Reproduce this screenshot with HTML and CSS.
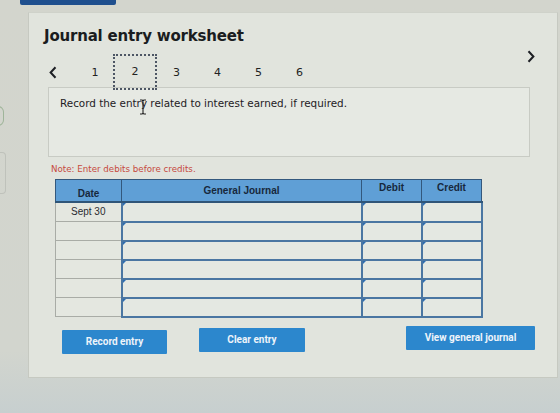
FILE: index.html
```html
<!DOCTYPE html>
<html lang="en">
<head>
<meta charset="utf-8">
<title>Journal entry worksheet</title>
<link rel="stylesheet" href="styles.css">
</head>
<body>
  <div class="topbar"><div class="tab"></div></div>
  <div class="screen">
    <aside class="rail">
      <div class="rail-pill"></div>
      <div class="rail-box"></div>
    </aside>
    <main class="panel">
      <h1 class="title">Journal entry worksheet</h1>

      <nav class="steps">
        <button class="arrow prev" aria-label="Previous">
          <svg width="8" height="13" viewBox="0 0 8 13"><path d="M6.5 1.2 1.6 6.5l4.9 5.3" fill="none" stroke="#1d1f24" stroke-width="2"/></svg>
        </button>
        <ol class="step-list">
          <li class="step first-step">1</li>
          <li class="step current">2</li>
          <li class="step">3</li>
          <li class="step">4</li>
          <li class="step">5</li>
          <li class="step">6</li>
        </ol>
        <button class="arrow next" aria-label="Next">
          <svg width="8" height="13" viewBox="0 0 8 13"><path d="M1.5 1.2 6.4 6.5l-4.9 5.3" fill="none" stroke="#1d1f24" stroke-width="2"/></svg>
        </button>
      </nav>

      <section class="prompt">
        <p class="prompt-text">Record the entry related to interest earned, if required.</p>
        <svg class="ibeam" width="8" height="16" viewBox="0 0 8 16"><path d="M1 1h2.2l.8.8.8-.8H7M4 1.8v12.4M1 15h2.2l.8-.8.8.8H7" fill="none" stroke="#222" stroke-width="1.1"/></svg>
      </section>

      <p class="note">Note: Enter debits before credits.</p>

      <table class="journal">
        <thead>
          <tr>
            <th class="c-date">Date</th>
            <th class="c-acct">General Journal</th>
            <th class="c-amt">Debit</th>
            <th class="c-amt">Credit</th>
          </tr>
        </thead>
        <tbody>
          <tr class="first">
            <td class="date">Sept 30</td>
            <td class="field"></td>
            <td class="field"></td>
            <td class="field"></td>
          </tr>
          <tr><td class="date"></td><td class="field"></td><td class="field"></td><td class="field"></td></tr>
          <tr><td class="date"></td><td class="field"></td><td class="field"></td><td class="field"></td></tr>
          <tr><td class="date"></td><td class="field"></td><td class="field"></td><td class="field"></td></tr>
          <tr><td class="date"></td><td class="field"></td><td class="field"></td><td class="field"></td></tr>
          <tr><td class="date"></td><td class="field"></td><td class="field"></td><td class="field"></td></tr>
        </tbody>
      </table>

      <div class="actions">
        <button class="btn record">Record entry</button>
        <button class="btn clear">Clear entry</button>
        <button class="btn view">View general journal</button>
      </div>
    </main>
  </div>
</body>
</html>
```
FILE: styles.css
```css
* { box-sizing: border-box; }

html, body {
  margin: 0;
  height: 100%;
}

body {
  width: 560px;
  height: 413px;
  overflow: hidden;
  background: linear-gradient(180deg, #d3d5cd 0%, #d2d5ce 85%, #c7cfcf 100%);
  font-family: "DejaVu Sans", Verdana, sans-serif;
  color: #1f2125;
  display: flex;
  flex-direction: column;
}

/* top navigation strip */
.topbar {
  height: 12px;
  padding-left: 20px;
}
.tab {
  width: 96px;
  height: 5px;
  background: #1f4f8e;
  border-radius: 0 0 2px 2px;
}

.screen {
  display: flex;
  align-items: flex-start;
}

/* left edge of the neighbouring column */
.rail {
  width: 28px;
  flex: none;
  padding-top: 94px;
  display: flex;
  flex-direction: column;
  gap: 26px;
}
.rail-pill {
  width: 6px;
  height: 20px;
  margin-left: -2px;
  border: 1.5px solid #9fb59a;
  border-left: none;
  border-radius: 0 6px 6px 0;
}
.rail-box {
  width: 10px;
  height: 42px;
  margin-left: -4px;
  border: 1px solid #bfc2bb;
  border-left: none;
  border-radius: 0 4px 4px 0;
}

/* worksheet panel */
.panel {
  width: 530px;
  height: 366px;
  background: #e1e4dd;
  border: 1px solid #c6c9c1;
  border-top-color: #cfd2ca;
  padding: 13px 0 0 15px;
  position: relative;
}

.title {
  margin: 0;
  font-family: "DejaVu Sans", Verdana, sans-serif;
  font-weight: bold;
  font-size: 15px;
  letter-spacing: -0.2px;
  color: #1a1c20;
  line-height: 20px;
}

/* step navigation */
.steps {
  display: flex;
  align-items: center;
  height: 37px;
  margin-top: 7px;
}
.arrow {
  border: none;
  background: none;
  padding: 0;
  display: flex;
}
.prev { margin-left: 5px; margin-right: 19px; margin-top: 2px; }
.next { margin-left: auto; margin-right: 22px; align-self: flex-start; margin-top: -3px; }

.step-list {
  list-style: none;
  margin: 0;
  padding: 0;
  display: flex;
  align-items: center;
  position: relative;
  z-index: 1;
}
.step {
  width: 41px;
  text-align: center;
  font-size: 11px;
  color: #222;
  padding-top: 2px;
}
.step.first-step { width: 38px; }
.step.current {
  width: 44px;
  height: 36px;
  margin: 0 -1px;
  padding-top: 0;
  line-height: 32px;
  border: 2px dotted #4d5664;
}

/* instruction box */
.prompt {
  position: relative;
  margin: -3px 0 0 4px;
  width: 482px;
  height: 70px;
  background: #e6e9e3;
  border: 1px solid #c8cbc4;
  padding: 9px 0 0 11px;
}
.prompt-text {
  margin: 0;
  font-size: 10.4px;
  color: #1e2024;
}
.ibeam {
  position: absolute;
  left: 90px;
  top: 11px;
}

.note {
  margin: 7px 0 0 7px;
  font-size: 8.7px;
  color: #c64a3d;
}

/* journal grid */
.journal {
  margin: 5px 0 0 11px;
  width: 427px;
  border-collapse: collapse;
  font-family: "Liberation Sans", Arial, sans-serif;
  font-size: 10px;
  table-layout: fixed;
}
.journal th {
  height: 22px;
  background: #5f9fd6;
  color: #17283c;
  font-weight: bold;
  border: 1px solid #33587d;
  border-bottom: 2px solid #2f5578;
  padding: 0;
}
.c-date { width: 66px; }
.c-acct { width: 240px; }
.c-amt { width: 60px; }
.journal th.c-date { padding-top: 6px; }
.journal th.c-amt { padding-bottom: 6px; }

.journal td {
  height: 19px;
  padding: 0;
}
.journal tr.first td { height: 20px; }

.date {
  background: #e4e7e0;
  border: 1px solid #a9aca6;
  text-align: center;
  color: #2a2c30;
}
.field {
  position: relative;
  background: #e4e8e2;
  border: 2px solid #4a76a2;
}
.field::before {
  content: "";
  position: absolute;
  left: 0;
  top: 0;
  border-top: 3px solid #2c6cb0;
  border-right: 3px solid transparent;
}

/* action buttons */
.actions {
  display: flex;
  align-items: flex-start;
  margin: 10px 0 0 18px;
}
.btn {
  border: none;
  border-radius: 1px;
  background: #2c87cd;
  color: #eef4fa;
  font-family: Roboto, "Open Sans", sans-serif;
  font-weight: bold;
  font-size: 10px;
  height: 24px;
  padding: 0;
}
.record { width: 105px; margin-top: 2px; }
.clear { width: 106px; margin-left: 32px; }
.view { width: 129px; margin-left: auto; margin-right: 22px; margin-top: -2px; }
```
